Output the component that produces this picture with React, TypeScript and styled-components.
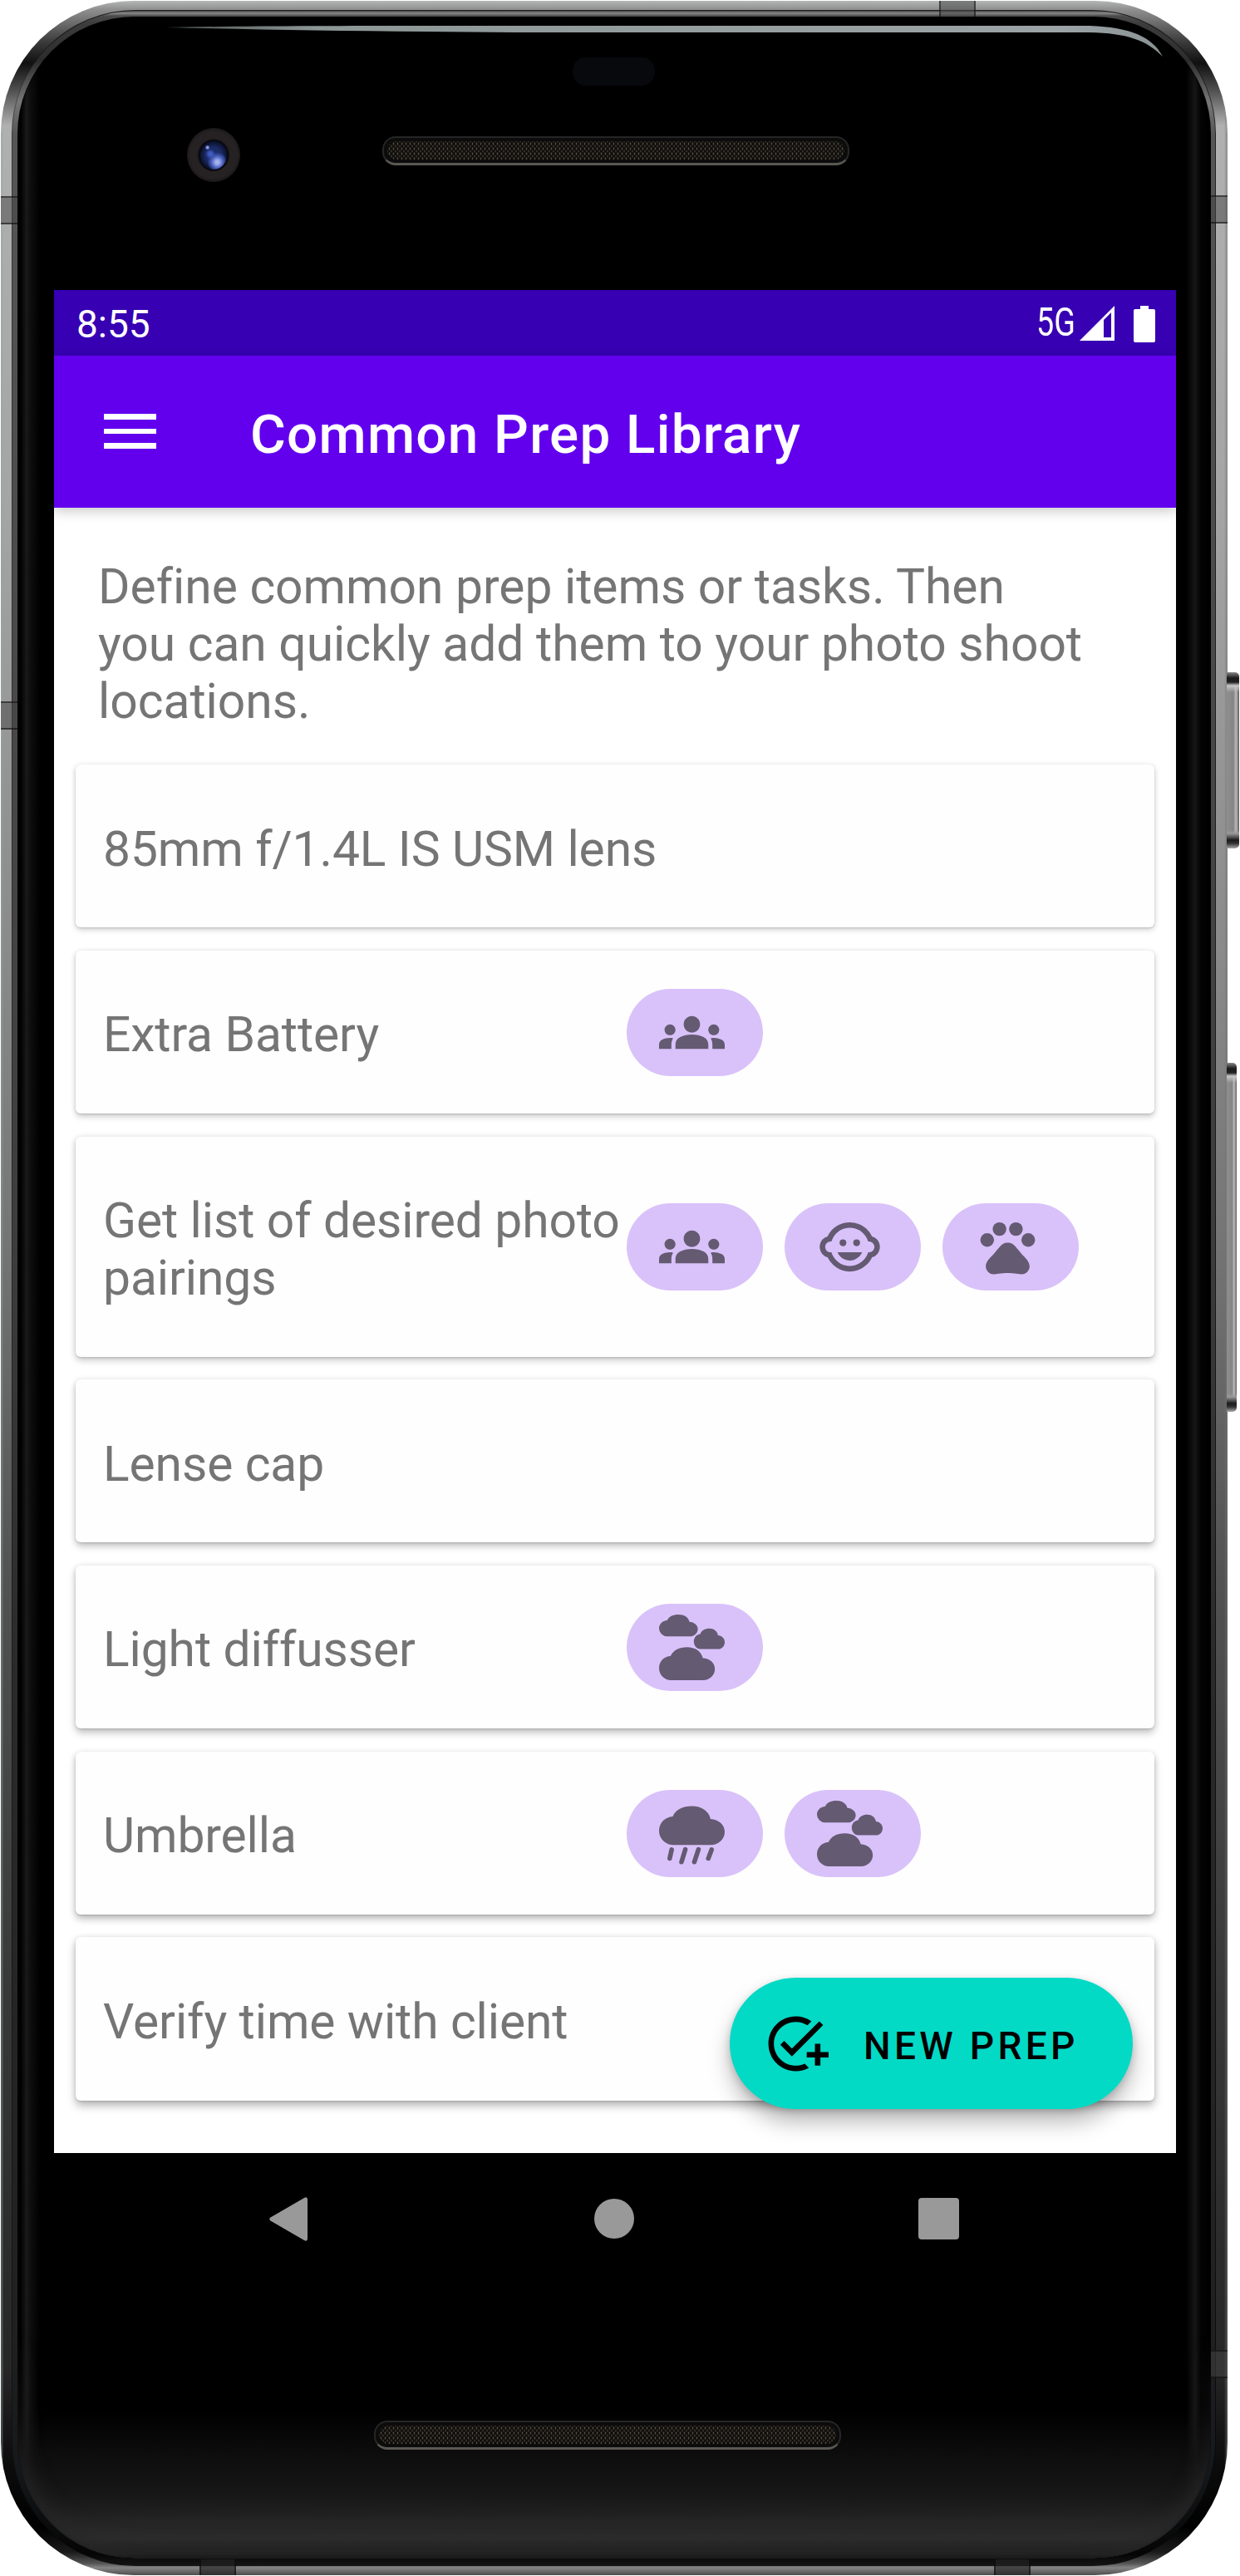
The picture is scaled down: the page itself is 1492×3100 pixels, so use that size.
import React from "react";
import styled, { createGlobalStyle } from "styled-components";
import { MdAddTask, MdChildCare, MdGroups, MdPets } from "react-icons/md";

const Global = createGlobalStyle`
  *, *::before, *::after { box-sizing: border-box; }
  body { margin: 0; background: #fff; font-family: Roboto, "Liberation Sans", sans-serif; }
`;

/* ---------- device ---------- */

const Stage = styled.div`
  width: 1492px;
  height: 3100px;
  padding: 1px 15px 1px 1px;
  overflow: hidden;
`;

const Device = styled.div`
  position: relative;
  width: 1476px;
  height: 3098px;
  padding: 11px 14px 11px 13px;
  border-radius: 160px;
  background:
    linear-gradient(90deg, rgba(150, 165, 168, 0.35) 0 2px, transparent 3px 1472px, rgba(110, 115, 118, 0.5) 1475px),
    linear-gradient(
      180deg,
      #b4b7b6 0, #909090 10px, #777 22px, #3a3a3a 50px, #101010 75px, #4a4a4a 105px, #b0b0b0 150px,
      #a4a4a4 620px, #8a8a8a 1140px, #747474 1500px, #525252 1900px, #383838 2400px, #262626 2850px,
      #0d0d0d 2960px, #000 3040px, #1a1a1a 3070px, #555 3084px, #858585 3089px, #4c4c4c 3098px
    );
`;

const InnerRing = styled.div`
  height: 100%;
  padding: 7px 5px 9px 6px;
  border-radius: 149px;
  border-left: 1px solid rgba(0, 0, 0, 0.35);
  border-right: 1px solid rgba(0, 0, 0, 0.6);
  border-top: 1px solid #1c1c1c;
  background: linear-gradient(
    180deg,
    #454545 0, #8a8a8a 3px, #4c4c4c 6px, #3c3c3c 16px, #2c2c2c 60px, #777 110px, #555 150px,
    #474747 900px, #3c3c3c 1500px, #2a2a2a 2000px, #202020 2800px, #15181b 2960px, #050505 3060px, #161616 3076px
  );
`;

const Glass = styled.div`
  position: relative;
  display: flex;
  flex-direction: column;
  height: 100%;
  border-radius: 141px;
  overflow: hidden;
  background:
    linear-gradient(180deg, transparent 2880px, rgba(18, 18, 18, 0.8) 2940px, rgba(26, 26, 26, 0.9) 2985px, #2d2d2d 3035px, #1c1c1c 3054px, #000 3057px),
    linear-gradient(90deg, #050505 0, #020202 4px, #191919 11px, #0d0d0d 16px, #000 27px, #000 1406px, #161616 1417px, #030303 1424px, #000 100%);
  box-shadow: inset 0 0 4px #000;
`;

const CornerGlow = styled.div`
  position: absolute;
  inset: auto 0 0 0;
  height: 330px;
  border-radius: 0 0 141px 141px;
  box-shadow: inset 0 -8px 26px 2px #272727;
  clip-path: inset(60px 0 0 0);
  mask-image: linear-gradient(180deg, transparent 60px, #000 240px);
`;

const Gloss = styled.svg`
  position: absolute;
  left: 0;
  top: 0;
`;

const Antenna = styled.div<{ $edge: "left" | "right" | "top" | "bottom"; $at: number }>`
  position: absolute;
  background: ${(p) => (p.$edge === "bottom" ? "rgba(35, 35, 35, 0.65)" : "rgba(70, 70, 70, 0.5)")};
  ${({ $edge, $at }) =>
    $edge === "left" || $edge === "right"
      ? `${$edge}: 0; top: ${$at}px; width: 20px; height: 34px; border-top: 2px solid rgba(0,0,0,.45); border-bottom: 2px solid rgba(0,0,0,.5);`
      : `${$edge}: 0; left: ${$at}px; height: 19px; width: 44px; border-left: 2px solid rgba(0,0,0,.45); border-right: 2px solid rgba(0,0,0,.45);`}
`;

const SideKey = styled.div<{ $top: number; $height: number; $width: number }>`
  position: absolute;
  left: 1475px;
  top: ${(p) => p.$top}px;
  width: ${(p) => p.$width}px;
  height: ${(p) => p.$height}px;
  border-radius: 0 5px 5px 0;
  background:
    linear-gradient(180deg, #888 0, #1a1a1a 7px, #222 12px, #c8c8c8 16px, transparent 24px calc(100% - 22px), #999 calc(100% - 18px), #1a1a1a calc(100% - 10px), #333 calc(100% - 6px), #aaa 100%),
    linear-gradient(90deg, #8f8f8f 0, #858585 55%, #b8b8b8 72%, #9a9a9a 85%, #555 100%);
`;

const TopBezel = styled.div`
  height: 329px;
  flex: none;
  padding-top: 49px;
`;

const Sensor = styled.div`
  width: 99px;
  height: 34px;
  margin-left: 668px;
  border-radius: 15px / 17px;
  background: #08090d;
`;

const Earpiece = styled.div`
  display: flex;
  align-items: flex-start;
  gap: 171px;
  padding: 51px 0 0 204px;
`;

const Camera = styled.div`
  display: grid;
  place-items: center;
  width: 64px;
  height: 65px;
  border-radius: 50%;
  background: radial-gradient(circle, #111 0 18px, #262223 20px 28px, #1c191a 32px);
`;

const Lens = styled.div`
  width: 36px;
  height: 38px;
  border-radius: 50%;
  border: 2px solid #0a0a12;
  background:
    radial-gradient(circle at 27% 22%, #8fa2e8 0 1px, transparent 3px),
    radial-gradient(circle at 38% 45%, #3f5bc0 0 2px, transparent 6px),
    radial-gradient(circle at 64% 74%, #a5b2f0 0 2px, #4a61bd 7px, transparent 12px),
    radial-gradient(circle, #1b2b68 0 40%, #080d24 75%);
`;

const Grille = styled.div<{ $drop?: number }>`
  width: 562px;
  height: 35px;
  margin-top: ${(p) => p.$drop ?? 0}px;
  padding: 4px;
  border-radius: 16px;
  border: 2px solid #262626;
  border-bottom: 3px solid #5a5852;
  background: #0c0c0c;
`;

const Mesh = styled.div`
  height: 100%;
  border-radius: 11px;
  background-color: #0c0b09;
  background-image:
    radial-gradient(ellipse 1.2px 2px, #524b40 60%, transparent),
    radial-gradient(ellipse 1.2px 2px, #423d34 60%, transparent);
  background-size: 5px 6px;
  background-position: 0 0, 2.5px 3px;
`;

const BottomBezel = styled.div`
  padding: 164px 0 0 429px;
`;

/* ---------- screen ---------- */

const Screen = styled.div`
  position: relative;
  width: 1350px;
  height: 2400px;
  flex: none;
  margin-left: 44px;
  display: flex;
  flex-direction: column;
  background: #000;
`;

const StatusBar = styled.div`
  display: flex;
  align-items: center;
  justify-content: space-between;
  height: 79px;
  flex: none;
  padding: 2px 25px 0 27px;
  background: #3700b3;
  color: #fff;
  font-size: 46px;
  line-height: 54px;
`;

const StatusIcons = styled.div`
  display: flex;
  align-items: center;
  height: 54px;
`;

const Network = styled.span`
  width: 52px;
  margin-top: -4px;
  font-size: 48px;
  transform: scaleX(0.785);
  transform-origin: 0 50%;
  white-space: nowrap;
`;

const AppBar = styled.div`
  position: relative;
  z-index: 1;
  display: flex;
  align-items: center;
  height: 183px;
  flex: none;
  padding-left: 60px;
  background: #6200ee;
  box-shadow: 0 4px 14px rgba(0, 0, 0, 0.22);
`;

const MenuButton = styled.button`
  display: flex;
  flex-direction: column;
  gap: 11px;
  width: 63px;
  padding: 0;
  margin-top: -1px;
  border: 0;
  background: none;
`;

const MenuBar = styled.span`
  height: 6.5px;
  background: #fff;
`;

const Title = styled.h1`
  margin: 6px 0 0 113px;
  color: #fff;
  font-size: 65.6px;
  line-height: 77px;
  font-weight: 500;
  letter-spacing: 1.25px;
`;

const Content = styled.main`
  position: relative;
  height: 1980px;
  flex: none;
  padding: 58px 26px 0;
  background: #fff;
  overflow: hidden;
`;

const Intro = styled.p`
  height: 251px;
  margin: 0;
  padding: 3px 40px 0 27px;
  color: #757575;
  font-size: 58.75px;
  line-height: 68.75px;
  letter-spacing: -0.03px;
`;

const List = styled.div`
  display: flex;
  flex-direction: column;
  gap: 27.5px;
`;

const Card = styled.div<{ $depth: number }>`
  display: flex;
  align-items: center;
  padding: 64.5px 0 63px 33px;
  border-radius: 6px;
  background: #fefefe;
  box-shadow:
    0 ${(p) => 3 + p.$depth * 0.4}px ${(p) => 7 + p.$depth * 0.6}px rgba(0, 0, 0, ${(p) => 0.17 + p.$depth * 0.02}),
    0 1px 2px rgba(0, 0, 0, 0.12),
    0 0 7px rgba(0, 0, 0, 0.06);
`;

const PrepName = styled.div<{ $tagged: boolean }>`
  width: ${(p) => (p.$tagged ? "630px" : "auto")};
  flex: none;
  margin: 3px 0 -3px;
  color: #757575;
  font-size: 58.75px;
  line-height: 68.75px;
  letter-spacing: -0.1px;
`;

const Tags = styled.div`
  display: flex;
  gap: 26px;
  margin: -18.5px 0;
`;

const Chip = styled.span`
  display: flex;
  align-items: center;
  width: 164px;
  height: 105px;
  padding-left: 39px;
  border-radius: 53px;
  background: #d9c2fa;
  color: #645a72;
  svg { width: 79px; height: 79px; flex: none; }
`;

const NewPrep = styled.button`
  position: absolute;
  right: 52px;
  bottom: 53px;
  display: flex;
  align-items: center;
  gap: 42px;
  width: 485px;
  height: 158px;
  padding: 0 0 0 40px;
  border: 0;
  border-radius: 79px;
  background: #03dac6;
  color: #000;
  font-family: inherit;
  font-size: 46px;
  line-height: 54px;
  font-weight: 500;
  letter-spacing: 4.3px;
  white-space: nowrap;
  box-shadow: 0 16px 26px rgba(0, 0, 0, 0.27), 0 3px 10px rgba(0, 0, 0, 0.16);
  svg { width: 79px; height: 79px; flex: none; }
`;

const NewPrepLabel = styled.span`
  padding-top: 5px;
`;

const NavBar = styled.div`
  display: flex;
  align-items: center;
  justify-content: space-between;
  flex: 1;
  padding: 0 261px 0 259px;
  svg { display: block; fill: #999; }
`;

/* ---------- drawings ---------- */

const CLOUD =
  "M5.2 14.2A5.2 5.2 0 0 1 0 9C0 6.2 2.1 4 5 3.8C5.9 1.4 8.7 0 12 0C15.6 0 18.2 1.8 18.8 4.7C21.8 4.9 24 6.8 24 9.4C24 12 21.8 14.2 18.9 14.2Z";

const Rain = () => (
  <svg viewBox="0 0 24 24" fill="currentColor">
    <g transform="translate(0 2)">
      <path d={CLOUD} />
      <path
        d="M4.6 15.9L3.9 19.1M9.6 15.8L8.2 20.4M14.4 15.8L12.9 20.4M19.2 15.9L18 19.1"
        fill="none"
        stroke="currentColor"
        strokeWidth="1.7"
        strokeLinecap="round"
      />
    </g>
  </svg>
);

const Cloudy = () => (
  <svg viewBox="0 0 24 24" fill="currentColor">
    <path d={CLOUD} transform="scale(.59 .563)" />
    <path d={CLOUD} transform="translate(12.7 5.1) scale(.471 .53)" />
    <path d={CLOUD} transform="translate(0 11.9) scale(.85 .852)" />
  </svg>
);

const tagIcons = {
  group: MdGroups,
  child: MdChildCare,
  pets: MdPets,
  rain: Rain,
  cloudy: Cloudy,
};

type Tag = keyof typeof tagIcons;

const preps: { name: string; tags: Tag[] }[] = [
  { name: "85mm f/1.4L IS USM lens", tags: [] },
  { name: "Extra Battery", tags: ["group"] },
  { name: "Get list of desired photo pairings", tags: ["group", "child", "pets"] },
  { name: "Lense cap", tags: [] },
  { name: "Light diffusser", tags: ["cloudy"] },
  { name: "Umbrella", tags: ["rain", "cloudy"] },
  { name: "Verify time with client", tags: [] },
];

const PrepCard = ({ name, tags, depth }: { name: string; tags: Tag[]; depth: number }) => (
  <Card $depth={depth}>
    <PrepName $tagged={tags.length > 0}>{name}</PrepName>
    {tags.length > 0 && (
      <Tags>
        {tags.map((tag) => {
          const Icon = tagIcons[tag];
          return (
            <Chip key={tag}>
              <Icon />
            </Chip>
          );
        })}
      </Tags>
    )}
  </Card>
);

const Speaker = ({ drop }: { drop?: number }) => (
  <Grille $drop={drop}>
    <Mesh />
  </Grille>
);

export default function App() {
  return (
    <>
      <Global />
      <Stage>
        <Device>
          <SideKey $top={808} $height={212} $width={15} />
          <SideKey $top={1278} $height={420} $width={12} />
          <InnerRing>
            <Glass>
              <CornerGlow />
              <Gloss width="1436" height="60" viewBox="0 0 1436 60">
                <defs>
                  <linearGradient id="gloss" x1="0" x2="1">
                    <stop offset="0" stopColor="#48504f" />
                    <stop offset=".15" stopColor="#8d9796" />
                    <stop offset=".9" stopColor="#9ca3a6" />
                    <stop offset="1" stopColor="#8b9294" />
                  </linearGradient>
                </defs>
                <path
                  d="M178 13C280 11 420 11 560 11H1290C1340 13 1365 24 1378 48C1358 28 1335 20 1290 19H600C450 18 300 16 178 13Z"
                  fill="url(#gloss)"
                />
              </Gloss>
              <TopBezel>
                <Sensor />
                <Earpiece>
                  <Camera>
                    <Lens />
                  </Camera>
                  <Speaker drop={10} />
                </Earpiece>
              </TopBezel>

              <Screen>
                <StatusBar>
                  <span>8:55</span>
                  <StatusIcons>
                    <Network>5G</Network>
                    <svg width="42" height="43" viewBox="0 0 42 43" fill="#fff">
                      <path fillRule="evenodd" d="M0 42L42 0V42ZM29 17V38H38V8Z" />
                    </svg>
                    <svg width="49" height="44" viewBox="-23 0 49 44" fill="#fff">
                      <path d="M8 0H18V4H24Q26 4 26 6V42Q26 44 24 44H2Q0 44 0 42V6Q0 4 2 4H8Z" />
                    </svg>
                  </StatusIcons>
                </StatusBar>
                <AppBar>
                  <MenuButton aria-label="Menu">
                    <MenuBar />
                    <MenuBar />
                    <MenuBar />
                  </MenuButton>
                  <Title>Common Prep Library</Title>
                </AppBar>
                <Content>
                  <Intro>
                    Define common prep items or tasks. Then
                    <br />
                    you can quickly add them to your photo shoot locations.
                  </Intro>
                  <List>
                    {preps.map((prep, i) => (
                      <PrepCard key={prep.name} {...prep} depth={i} />
                    ))}
                  </List>
                  <NewPrep>
                    <MdAddTask />
                    <NewPrepLabel>NEW PREP</NewPrepLabel>
                  </NewPrep>
                </Content>
                <NavBar>
                  <svg width="46" height="53" viewBox="0 0 46 53">
                    <path d="M1.5 24.5L42 1Q46 -1 46 3V50Q46 54 42 52L1.5 28.5Q-1 26.5 1.5 24.5Z" />
                  </svg>
                  <svg width="50" height="48" viewBox="-2 0 50 48">
                    <circle cx="24" cy="24" r="24" />
                  </svg>
                  <svg width="49" height="50" viewBox="0 0 49 50">
                    <rect width="49" height="50" rx="4" />
                  </svg>
                </NavBar>
              </Screen>

              <BottomBezel>
                <Speaker />
              </BottomBezel>
            </Glass>
          </InnerRing>
          <Antenna $edge="left" $at={235} />
          <Antenna $edge="left" $at={843} />
          <Antenna $edge="right" $at={234} />
          <Antenna $edge="right" $at={2827} />
          <Antenna $edge="top" $at={1129} />
          <Antenna $edge="bottom" $at={239} />
          <Antenna $edge="bottom" $at={1195} />
        </Device>
      </Stage>
    </>
  );
}
